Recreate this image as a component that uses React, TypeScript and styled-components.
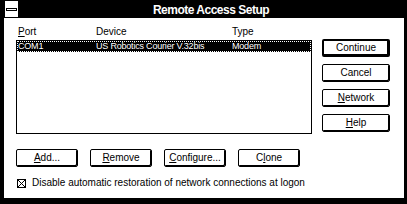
import React from "react";
import styled, { createGlobalStyle } from "styled-components";

const GlobalStyle = createGlobalStyle`
  html, body {
    margin: 0;
    padding: 0;
    background: #000;
  }
  body {
    font-family: "Liberation Sans", Arial, sans-serif;
    color: #000;
  }
`;

const Window = styled.div`
  width: 407px;
  height: 204px;
  box-sizing: border-box;
  background: #000;
  padding: 0 3px 6px 4px;
  display: flex;
  flex-direction: column;
`;

const TitleBar = styled.div`
  height: 18px;
  display: flex;
  align-items: stretch;
`;

const SysMenu = styled.div`
  width: 13px;
  margin: 1px 0 1px 1px;
  background: #fff;
  display: flex;
  align-items: center;
  justify-content: center;
`;

const SysBar = styled.div`
  width: 9px;
  height: 1px;
  border: 1px solid #000;
  background: #fff;
`;

const Title = styled.div`
  flex: 1;
  color: #fff;
  font-size: 12px;
  font-weight: bold;
  letter-spacing: -0.5px;
  line-height: 18px;
  padding-top: 1px;
  box-sizing: border-box;
  text-align: center;
`;

const Client = styled.div`
  flex: 1;
  background: #fff;
  display: flex;
  gap: 10px;
  padding-left: 12px;
`;

const LeftCol = styled.div`
  width: 296px;
  padding-top: 8px;
  display: flex;
  flex-direction: column;
`;

const Columns = styled.div`
  display: grid;
  grid-template-columns: 78px 136px 1fr;
`;

const Header = styled(Columns)`
  padding-left: 2px;
  font-size: 10px;
  line-height: 12px;
  margin-bottom: 2px;
`;

const ListBox = styled.div`
  box-sizing: border-box;
  height: 94px;
  border: 1px solid #000;
`;

const Row = styled(Columns)<{ $selected?: boolean }>`
  border: 1px dotted ${(p) => (p.$selected ? "#fff" : "transparent")};
  background: ${(p) => (p.$selected ? "#000" : "transparent")};
  color: ${(p) => (p.$selected ? "#fff" : "#000")};
  font-size: 9px;
  letter-spacing: -0.2px;
  line-height: 9px;
  white-space: nowrap;
`;

const ButtonRow = styled.div`
  display: flex;
  gap: 12px;
  margin-top: 15px;
`;

const Button = styled.button<{ $default?: boolean; $wide?: boolean }>`
  box-sizing: border-box;
  width: ${(p) => (p.$wide ? 68 : 62)}px;
  height: 18px;
  padding: 0;
  margin: 0;
  background: #fff;
  color: #000;
  font-family: "Liberation Sans", Arial, sans-serif;
  font-size: 10px;
  line-height: 12px;
  border: ${(p) => (p.$default ? 2 : 1)}px solid #000;
  border-radius: 2px;
  box-shadow: inset -1px -1px 0 #000;
  display: flex;
  align-items: center;
  justify-content: center;
`;

const Key = styled.span`
  text-decoration: underline;
`;

const CheckRow = styled.label`
  display: flex;
  align-items: center;
  gap: 6px;
  margin: 10px 0 0 1px;
  font-size: 10px;
  line-height: 12px;
  white-space: nowrap;
`;

const CheckBox = styled.span`
  box-sizing: border-box;
  width: 9px;
  height: 9px;
  border: 1px solid #000;
  display: flex;
`;

const RightCol = styled.div`
  padding-top: 21px;
  display: flex;
  flex-direction: column;
  gap: 7px;
`;

export default function App() {
  return (
    <>
      <GlobalStyle />
      <Window>
        <TitleBar>
          <SysMenu>
            <SysBar />
          </SysMenu>
          <Title>Remote Access Setup</Title>
        </TitleBar>
        <Client>
          <LeftCol>
            <Header>
              <span>
                <Key>P</Key>ort
              </span>
              <span>Device</span>
              <span>Type</span>
            </Header>
            <ListBox>
              <Row $selected>
                <span>COM1</span>
                <span>US Robotics Courier V.32bis</span>
                <span>Modem</span>
              </Row>
            </ListBox>
            <ButtonRow>
              <Button>
                <Key>A</Key>dd...
              </Button>
              <Button>
                <Key>R</Key>emove
              </Button>
              <Button>
                <Key>C</Key>onfigure...
              </Button>
              <Button>
                C<Key>l</Key>one
              </Button>
            </ButtonRow>
            <CheckRow>
              <CheckBox>
                <svg width="7" height="7" viewBox="0 0 7 7">
                  <path d="M0 0L7 7M7 0L0 7" stroke="#000" strokeWidth="1" />
                </svg>
              </CheckBox>
              Disable automatic restoration of network connections at logon
            </CheckRow>
          </LeftCol>
          <RightCol>
            <Button $wide $default>
              Continue
            </Button>
            <Button $wide>Cancel</Button>
            <Button $wide>
              <Key>N</Key>etwork
            </Button>
            <Button $wide>
              <Key>H</Key>elp
            </Button>
          </RightCol>
        </Client>
      </Window>
    </>
  );
}
